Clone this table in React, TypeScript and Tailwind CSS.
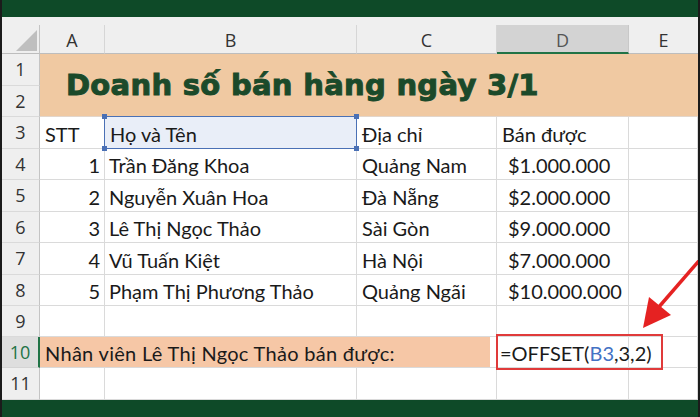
import React from "react";

const cellFont = { fontFamily: "Lato, 'Noto Sans', sans-serif" };

function RowHead({ n, active }: { n: number; active?: boolean }) {
  return active ? (
    <div className="flex items-center justify-center bg-[#dedede] border-r-2 border-r-[#217346] border-b border-b-[#d4d4d4] text-[18px] text-[#217346] font-['Open_Sans',sans-serif]">
      {n}
    </div>
  ) : (
    <div className="flex items-center justify-center bg-[#efefef] border-r border-r-[#c4c4c4] border-b border-b-[#dadada] text-[18px] text-[#333] font-['Open_Sans',sans-serif]">
      {n}
    </div>
  );
}

function Cell({ children, className = "" }: { children?: React.ReactNode; className?: string }) {
  return (
    <div
      className={"flex items-center whitespace-nowrap border-r border-b border-[#dadada] text-[20px] text-[#1a1a1a] pt-[2px] " + className}
      style={cellFont}
    >
      {children}
    </div>
  );
}

const rows: [number, string, string, string][] = [
  [1, "Trần Đăng Khoa", "Quảng Nam", "$1.000.000"],
  [2, "Nguyễn Xuân Hoa", "Đà Nẵng", "$2.000.000"],
  [3, "Lê Thị Ngọc Thảo", "Sài Gòn", "$9.000.000"],
  [4, "Vũ Tuấn Kiệt", "Hà Nội", "$7.000.000"],
  [5, "Phạm Thị Phương Thảo", "Quảng Ngãi", "$10.000.000"],
];

export default function App() {
  return (
    <div className="relative w-[700px] h-[417px] overflow-hidden bg-white flex flex-col border-l-2 border-r-2 border-[#1b1b1b]">
      <div className="h-[17px] bg-[#0e4a28] shrink-0" />
      <div className="h-[8px] bg-[#efefef] shrink-0" />
      <div className="grid grid-cols-[38px_65px_252px_140px_132px_69px] grid-rows-[29px_32px_31px_32px_31px_32px_31px_32px_31px_31px_31px_32px] shrink-0">
        {/* header row */}
        <div className="relative bg-[#efefef] border-r border-r-[#c4c4c4] border-b border-b-[#bdbdbd]">
          <svg className="absolute right-[2px] bottom-[2px]" width="21" height="21" viewBox="0 0 21 21">
            <polygon points="0,21 21,21 21,0" fill="#bfbfbf" />
          </svg>
        </div>
        {["A", "B", "C"].map((l) => (
          <div
            key={l}
            className="flex items-center justify-center pt-[3px] bg-[#efefef] border-r border-r-[#d6d6d6] border-b border-b-[#bdbdbd] text-[18px] text-[#333] font-['Open_Sans',sans-serif]"
          >
            {l}
          </div>
        ))}
        <div className="flex items-center justify-center pt-[3px] bg-[#d3d3d3] border-r border-r-[#c8c8c8] border-b-2 border-b-[#217346] text-[18px] text-[#555] font-['Open_Sans',sans-serif]">
          D
        </div>
        <div className="flex items-center justify-center pt-[3px] bg-[#efefef] border-b border-b-[#bdbdbd] text-[18px] text-[#333] font-['Open_Sans',sans-serif]">
          E
        </div>

        {/* rows 1-2 merged title */}
        <RowHead n={1} />
        <div className="col-span-5 row-span-2 flex items-center pl-[26px] pt-[2px] bg-[#f0c9a2] border-b border-b-[#e2d6cc]">
          <span className="text-[29px] tracking-[0.3px] font-bold text-[#1b4a2a] [-webkit-text-stroke:1px_#1b4a2a] font-['DejaVu_Sans',sans-serif]">
            Doanh số bán hàng ngày 3/1
          </span>
        </div>
        <RowHead n={2} />

        {/* row 3 */}
        <RowHead n={3} />
        <Cell className="pl-[5px]">STT</Cell>
        <div className="relative">
          <Cell className="pl-[5px] h-full bg-[#e9eef8]">Họ và Tên</Cell>
          <div className="absolute -left-[1px] -top-[1px] right-0 bottom-0 border-[1.5px] border-[#4a70b5]" />
          <div className="absolute -left-[3px] -top-[3px] w-[5px] h-[5px] bg-[#4a70b5]" />
          <div className="absolute -right-[2px] -top-[3px] w-[5px] h-[5px] bg-[#4a70b5]" />
          <div className="absolute -left-[3px] -bottom-[2px] w-[5px] h-[5px] bg-[#4a70b5]" />
          <div className="absolute -right-[2px] -bottom-[2px] w-[5px] h-[5px] bg-[#4a70b5]" />
        </div>
        <Cell className="pl-[5px]">Địa chỉ</Cell>
        <Cell className="pl-[5px]">Bán được</Cell>
        <Cell />

        {rows.map(([n, name, place, money], i) => (
          <React.Fragment key={n}>
            <RowHead n={i + 4} />
            <Cell className="justify-end pr-[4px]">{n}</Cell>
            <Cell className="pl-[4px]">{name}</Cell>
            <Cell className="pl-[5px]">{place}</Cell>
            <Cell className="pl-[11px]">{money}</Cell>
            <Cell />
          </React.Fragment>
        ))}

        {/* row 9 */}
        <RowHead n={9} />
        <Cell />
        <Cell />
        <Cell />
        <Cell />
        <Cell />

        {/* row 10 */}
        <RowHead n={10} active />
        <div className="col-span-3 flex border-b border-[#dadada] pr-[7px]">
          <div className="flex-1 flex items-center pl-[5px] pt-[2px] bg-[#f6c7a6] whitespace-nowrap text-[20px] tracking-[0.3px] text-[#1a1a1a]" style={cellFont}>
            Nhân viên Lê Thị Ngọc Thảo bán được:
          </div>
        </div>
        <div className="relative">
          <Cell className="pl-[3px] h-full">
            =OFFSET(<span className="text-[#4472c4]">B3</span>,3,2)
          </Cell>
          <div className="absolute -left-[1px] -top-[3px] -bottom-[2px] w-[167px] border-[2.5px] border-[#e03a3a]" />
        </div>
        <Cell />

        {/* row 11 */}
        <RowHead n={11} />
        <Cell />
        <Cell />
        <Cell />
        <Cell />
        <Cell />
      </div>
      <div className="flex-1 bg-[#0e4a28]" />

      {/* annotation arrow */}
      <svg className="absolute left-0 top-0" width="700" height="417" viewBox="0 0 700 417">
        <line x1="702" y1="255" x2="656" y2="308" stroke="#e52222" strokeWidth="3.5" />
        <polygon points="641,328 647,297 669,315" fill="#e52222" />
      </svg>
    </div>
  );
}
